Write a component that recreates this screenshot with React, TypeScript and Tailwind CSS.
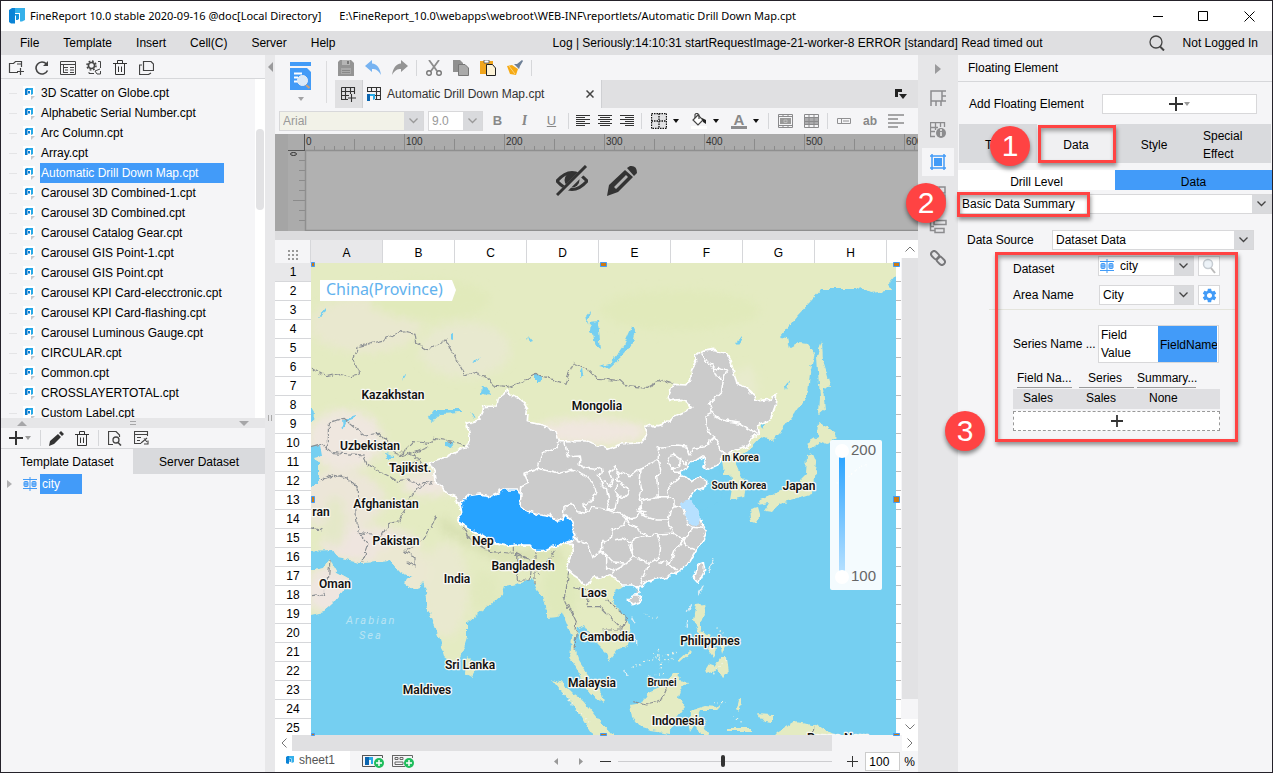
import React from "react";
import type { ReactNode } from "react";
import { MdSettings } from "react-icons/md";

const FILES = [
  "3D Scatter on Globe.cpt",
  "Alphabetic Serial Number.cpt",
  "Arc Column.cpt",
  "Array.cpt",
  "Automatic Drill Down Map.cpt",
  "Carousel 3D Combined-1.cpt",
  "Carousel 3D Combined.cpt",
  "Carousel Catalog Gear.cpt",
  "Carousel GIS Point-1.cpt",
  "Carousel GIS Point.cpt",
  "Carousel KPI Card-elecctronic.cpt",
  "Carousel KPI Card-flashing.cpt",
  "Carousel Luminous Gauge.cpt",
  "CIRCULAR.cpt",
  "Common.cpt",
  "CROSSLAYERTOTAL.cpt",
  "Custom Label.cpt",
];

function Ic({ w = 16, h = 16, label, children }: { w?: number; h?: number; label?: string; children: ReactNode }) {
  return (
    <svg width={w} height={h} viewBox={`0 0 ${w} ${h}`} fill="none" aria-label={label} className="shrink-0">
      {children}
    </svg>
  );
}

function Logo({ size }: { size: number }) {
  return (
    <svg width={size} height={size} viewBox="0 0 16 16" className="shrink-0">
      <path d="M0 2L3 0H8V5H6V15.500H2L0 14Z" fill="#0a83d6" />
      <path d="M6 0H16V12L13 13.500H11V5H6Z" fill="#35b0ea" />
      <path d="M6 6H10V11L8.500 12H6Z" fill="#1593dd" />
      <path d="M6 7.500H7V16H6Z" fill="#fff" />
    </svg>
  );
}

function FileIcon() {
  return (
    <svg width="12" height="14" viewBox="0 0 12 14" className="shrink-0">
      <path d="M0 0H12V9L8 14H0Z" fill="#fff" />
      <path d="M2 3L4 2H6V4H4.500V9H2Z" fill="#0a7dcf" />
      <path d="M4.500 2H10V8L8 9V4H4.500Z" fill="#27a8e6" />
      <path d="M5 5H7V7.500H5Z" fill="#0a7dcf" />
      <path d="M8 10H12L8 14Z" fill="#c6c8cc" />
    </svg>
  );
}

function DataIcon() {
  return (
    <Ic w={14} h={14}>
      <path d="M7 0V14M0 2.500H14M0 11.500H14" stroke="#429bf7" />
      <rect x="1" y="4.500" width="4" height="5" rx="1" fill="#8cc0f8" stroke="#429bf7" />
      <rect x="9" y="4.500" width="4" height="5" rx="1" fill="#8cc0f8" stroke="#429bf7" />
      <path d="M1 7H5M9 7H13" stroke="#429bf7" />
    </Ic>
  );
}

function Trash() {
  return (
    <Ic w={14} h={15} label="Delete">
      <path d="M0 3.500H14M4.500 3V.5H9.500V3M2.500 4V14.500H11.500V4M5.500 6.500V12M8.500 6.500V12" stroke="#333" />
    </Ic>
  );
}

function Btn({ label, w = "w-[26px]", children }: { label: string; w?: string; children: ReactNode }) {
  return (
    <button type="button" aria-label={label} className={`flex h-full shrink-0 items-center justify-center ${w}`}>
      {children}
    </button>
  );
}

function Chevron({ color = "#444" }: { color?: string }) {
  return (
    <Ic w={9} h={6}>
      <path d="M.5 .5L4.500 4.500L8.500 .5" stroke={color} strokeWidth="1.300" />
    </Ic>
  );
}

function Caret({ color = "#111" }: { color?: string }) {
  return (
    <Ic w={6} h={4}>
      <path d="M0 0H6L3 4Z" fill={color} />
    </Ic>
  );
}

function Combo({ label, value, className, text = "text-black", bg = "bg-white", icon }: {
  label: string; value: string; className: string; text?: string; bg?: string; icon?: boolean;
}) {
  return (
    <div className={`relative flex h-5 border border-[#d8d8da] ${bg} ${className}`}>
      {icon && <span className="flex w-[18px] items-center pl-px"><DataIcon /></span>}
      <select aria-label={label} defaultValue={value} className={`min-w-0 flex-1 appearance-none bg-transparent pl-[3px] outline-none ${text}`}>
        <option>{value}</option>
      </select>
      <span className="pointer-events-none flex w-[19px] items-center justify-center bg-[#d9dadd]">
        <Chevron color={text === "text-black" ? "#444" : "#999"} />
      </span>
    </div>
  );
}

function LeftPanel() {
  return (
    <aside className="flex w-[264px] shrink-0 flex-col bg-[#f5f5f7]">
      <div className="flex h-6 shrink-0 items-center border-b border-[#d6d7da] pl-[2px] pt-[2px]">
        <Btn label="New folder">
          <Ic w={16} h={15}>
            <path d="M10 12.500H1.500V3.500H5.500L7.500 1.500H13.500V7M9 4H13M12.500 8V15M9 11.500H16" stroke="#444" strokeWidth="1.200" />
          </Ic>
        </Btn>
        <Btn label="Refresh">
          <Ic w={14} h={14}>
            <path d="M12.500 9.500A6 6 0 1 1 11.500 3" stroke="#444" strokeWidth="1.600" />
            <path d="M13 0V5H8Z" fill="#444" />
          </Ic>
        </Btn>
        <Btn label="Templates">
          <Ic w={16} h={14}>
            <path d="M.5 .5H15.500V13.500H.5ZM0 3.500H15M3 6.500H8M5 9H8M3 11.500H8M3.500 4V12M10 6.500H14M10 9H14M10 11.500H14" stroke="#444" />
          </Ic>
        </Btn>
        <Btn label="Settings">
          <Ic w={16} h={15}>
            <circle cx="5.500" cy="5.500" r="3" stroke="#444" strokeWidth="1.500" />
            <circle cx="5.500" cy="5.500" r="4.500" stroke="#444" strokeWidth="1.500" strokeDasharray="1.800 1.730" />
            <path d="M12 1.500H14.500V8M3 12V13.500H8M14.500 11V14H11L9 11L14 9" stroke="#444" />
          </Ic>
        </Btn>
        <Btn label="Delete"><Trash /></Btn>
        <Btn label="Copy">
          <Ic w={15} h={14}>
            <path d="M4.500 .5H12L14.500 3V9.500H4.500ZM3 4H.5V13.500H9.500L12 12" stroke="#444" strokeWidth="1.200" />
          </Ic>
        </Btn>
      </div>
      <div className="flex h-[339px] shrink-0">
        <ul className="min-w-0 flex-1 overflow-hidden pt-1">
          {FILES.map((f) => (
            <li key={f} className="flex h-5 items-center">
              <span className="ml-2 h-px w-2 bg-[#e4e4e6]" />
              <span className="ml-[6px] flex w-[17px]"><FileIcon /></span>
              <button type="button" className={f.startsWith("Auto") ? "h-5 w-[184px] bg-[#429bf9] pl-px text-left text-white" : "h-5 pl-px text-left"}>
                {f}
              </button>
            </li>
          ))}
        </ul>
        <div className="w-[10px] bg-white px-px pt-[50px]"><div className="h-[81px] rounded-full bg-[#e2e2e4]" /></div>
      </div>
      <div className="flex h-[10px] shrink-0 items-center justify-between bg-[#e6e6e8] px-4">
        <Ic w={10} h={5}><path d="M0 5H10L5 0Z" fill="#a6a6a8" /></Ic>
        <Ic w={6} h={4}><path d="M0 .5H6M0 3.500H6" stroke="#a6a6a8" /></Ic>
        <Ic w={10} h={5}><path d="M0 0H10L5 5Z" fill="#a6a6a8" /></Ic>
      </div>
      <div className="flex h-[21px] shrink-0 items-center border-b border-[#d6d7da] pl-2">
        <button type="button" aria-label="Add dataset" className="flex items-center">
          <Ic w={14} h={14}><path d="M7 0V14M0 7H14" stroke="#333" strokeWidth="2" /></Ic>
          <span className="ml-[2px]"><Caret color="#999" /></span>
        </button>
        <span className="ml-[9px] mr-[2px] h-4 w-px bg-[#d6d7da]" />
        <Btn label="Edit">
          <Ic w={15} h={15}><path d="M0 15L1 10L9 3L12 6L5 13ZM10 2L12 0L15 3L13 5Z" fill="#333" /></Ic>
        </Btn>
        <Btn label="Delete dataset"><Trash /></Btn>
        <span className="mx-[3px] h-4 w-px bg-[#d6d7da]" />
        <Btn label="Preview dataset">
          <Ic w={14} h={15}>
            <path d="M5 13.500H.5V.5H8L11.500 4V6" stroke="#444" strokeWidth="1.200" />
            <circle cx="8" cy="9" r="3" stroke="#444" strokeWidth="1.300" />
            <path d="M10 11.500L13 14.500" stroke="#444" strokeWidth="1.600" />
          </Ic>
        </Btn>
        <Btn label="Dataset options">
          <Ic w={15} h={14}>
            <path d="M7 12.500H.5V.5H13.500V5M0 3.500H13M3 6.500H7M3 9.500H6M13 7L7 12M10 7.500L13 11M14 9.500V13H10" stroke="#444" strokeWidth="1.100" />
          </Ic>
        </Btn>
      </div>
      <div className="flex h-[25px] shrink-0">
        <button type="button" className="w-1/2 pt-px">Template Dataset</button>
        <button type="button" className="w-1/2 bg-[#d9dadd] pt-px">Server Dataset</button>
      </div>
      <div className="flex h-5 items-center">
        <span className="ml-[6px]"><Ic w={5} h={8}><path d="M0 0L5 4L0 8Z" fill="#b0b0b2" /></Ic></span>
        <span className="ml-[11px] flex w-[17px]"><DataIcon /></span>
        <button type="button" className="h-5 w-[42px] bg-[#429bf9] pl-[2px] text-left text-white">city</button>
      </div>
    </aside>
  );
}

function AlignLines({ kind }: { kind: "left" | "center" | "right" }) {
  const short = kind === "left" ? "M0 2.500H9M0 6.500H9M0 10.500H9" : kind === "center" ? "M2 2.500H12M2 6.500H12M2 10.500H12" : "M5 2.500H14M5 6.500H14M5 10.500H14";
  return (
    <Ic w={14} h={12}>
      <path d="M0 .5H14M0 4.500H14M0 8.500H14" stroke="#333" />
      <path d={short} stroke="#333" />
    </Ic>
  );
}

function Sep() {
  return <span className="mx-[3px] h-4 w-px shrink-0 bg-[#d6d7da]" />;
}

function TopTools() {
  return (
    <div className="flex h-[53px] shrink-0 bg-[#f5f5f7]">
      <button type="button" aria-label="Preview" className="flex w-[51px] flex-col items-center border-[#d6d7da] pt-[7px]">
        <Ic w={21} h={28}>
          <rect width="21" height="4" fill="#429bf7" />
          <path d="M0 6H17L21 10V28H0Z" fill="#429bf7" />
          <path d="M4 11.500H12M4 15.500H8M4 19.500H8" stroke="#fff" strokeWidth="2" />
          <circle cx="12.500" cy="18.500" r="5" fill="#d9e9f8" stroke="#e9eef4" />
          <path d="M16 23L19.500 26" stroke="#c9a07a" strokeWidth="2" />
        </Ic>
        <span className="mt-[7px]"><Caret color="#a2a2a4" /></span>
      </button>
      <span className="mt-[6px] h-[42px] w-px bg-[#dcdcde]" />
      <div className="min-w-0 flex-1 pl-2">
        <div className="-ml-[3px] flex h-[25px] items-center">
          <Btn label="Save" w="w-[27px]">
            <Ic><path d="M0 2L2 0H13L16 3V16H0Z" fill="#949494" /><path d="M4 0H12V5H4Z" fill="#b5b5b5" /><path d="M9 1H11V4H9Z" fill="#777" /><path d="M3 8H13V14H3Z" fill="#a9a9a9" /><path d="M4 10.500H12M4 12.500H12" stroke="#888" /></Ic>
          </Btn>
          <Btn label="Undo" w="w-[27px]">
            <Ic><path d="M0 6L7 0V3.500C12 4 15 8 16 15C13 10 11 9 7 9V12Z" fill="#77b3f1" /></Ic>
          </Btn>
          <Btn label="Redo" w="w-[27px]">
            <Ic><path d="M16 6L9 0V3.500C4 4 1 8 0 15C3 10 5 9 9 9V12Z" fill="#949494" /></Ic>
          </Btn>
          <Sep />
          <Btn label="Cut" w="w-[27px]">
            <Ic><path d="M3 0L11 11M13 0L5 11" stroke="#8c8c8c" strokeWidth="1.800" /><circle cx="3" cy="13" r="2.300" stroke="#777" strokeWidth="1.400" /><circle cx="13" cy="13" r="2.300" stroke="#777" strokeWidth="1.400" /></Ic>
          </Btn>
          <Btn label="Copy" w="w-[27px]">
            <Ic><path d="M0 0H7L10 3V12H0Z" fill="#909090" /><path d="M5.500 4.500H12L15.500 8V15.500H5.500Z" fill="#aaa" stroke="#777" /></Ic>
          </Btn>
          <Btn label="Paste" w="w-[27px]">
            <Ic><path d="M0 1H13V14H0Z" fill="#f0a51d" /><path d="M4 0H9V3H4Z" fill="#fff" stroke="#555" strokeWidth=".8" /><path d="M6.500 4.500H12.500L15.500 8V15.500H6.500Z" fill="#fdf3d8" stroke="#222" /></Ic>
          </Btn>
          <Btn label="Format brush" w="w-[27px]">
            <Ic><path d="M0 6L5 5L11 9L9 15L3 14Z" fill="#f6aa14" /><path d="M2 6L8 14" stroke="#fbd27c" /><path d="M7 4L12 9L13 6L16 1L15 0L10 4Z" fill="#6d7f96" /></Ic>
          </Btn>
          <Sep />
        </div>
        <div className="flex h-7 bg-[#e0e0e2]">
          <Btn label="New template" w="w-[27px]">
            <Ic w={15} h={15}><path d="M.5 .5H13.500V7M.5 .5V12.500H7M0 4.500H14M0 8.500H8M4.500 0V13M9.500 0V7M10.500 7V15M7 11H15" stroke="#333" strokeWidth="1.100" /></Ic>
          </Btn>
          <div className="flex w-[240px] items-center border-l border-r border-[#cfd0d3] bg-[#f5f5f7] pl-1">
            <Ic w={14} h={14}><path d="M.5 4V.5H13.500V13M0 4.500H13M4.500 0V5M9.500 0V13M8 8.500H14M8 12.500H14" stroke="#333" strokeWidth="1.100" /><path d="M0 7H3V14H0Z" fill="#0b65b0" /><path d="M3 7H8V12L6 13V9H3Z" fill="#28a9e6" /></Ic>
            <span className="ml-[6px] flex-1 whitespace-nowrap text-[#333]">Automatic Drill Down Map.cpt</span>
            <button type="button" aria-label="Close tab" className="mr-[7px]">
              <Ic w={8} h={8}><path d="M.5 .5L7.500 7.500M7.500 .5L.5 7.500" stroke="#444" strokeWidth="1.500" /></Ic>
            </button>
          </div>
          <button type="button" aria-label="Tab list" className="ml-auto mr-[11px]">
            <Ic w={12} h={10}><path d="M0 0H7V3H3V8H0Z" fill="#222" /><path d="M4 5H12L8 10Z" fill="#222" /></Ic>
          </button>
        </div>
      </div>
    </div>
  );
}

function FormatBar() {
  return (
    <div className="flex h-[26px] shrink-0 items-center overflow-hidden bg-[#f5f5f7] pl-1 text-[#888]">
      <Combo label="Font" value="Arial" className="mr-1 w-[145px] shrink-0" text="text-[#999]" bg="bg-[#f2f2e8]" />
      <Combo label="Font size" value="9.0" className="mr-px w-[55px] shrink-0" text="text-[#999]" />
      <Btn label="Bold" w="w-[27px]"><b className="text-[13px]">B</b></Btn>
      <Btn label="Italic" w="w-[27px]"><i className="font-serif text-[14px] font-bold">I</i></Btn>
      <Btn label="Underline" w="w-[27px]"><u className="text-[13px]">U</u></Btn>
      <Sep />
      <Btn label="Align left" w="w-[22px]"><AlignLines kind="left" /></Btn>
      <Btn label="Align center" w="w-[22px]"><AlignLines kind="center" /></Btn>
      <Btn label="Align right" w="w-[22px]"><AlignLines kind="right" /></Btn>
      <Sep />
      <Btn label="Borders" w="w-10">
        <Ic><path d="M.5 .5H15.500V15.500H.5ZM.5 8H15.500M8 .5V15.500" fill="#e2e2e4" stroke="#111" strokeWidth="1.300" strokeDasharray="1.500 1" /></Ic>
        <span className="ml-[6px]"><Caret /></span>
      </Btn>
      <Btn label="Fill colour" w="w-10">
        <Ic><path d="M7 2L2 7L7 12L12 7Z" fill="#fff" stroke="#444" strokeWidth="1.200" /><path d="M4 5V1.500Q6 -1 8 2V6" stroke="#444" strokeWidth="1.200" /><path d="M11 5L15 7V11L12 9Z" fill="#222" /><path d="M0 13H16V16H0Z" fill="#fff" /></Ic>
        <span className="ml-[6px]"><Caret /></span>
      </Btn>
      <Btn label="Font colour" w="w-10">
        <span className="flex w-4 flex-col items-center text-[15px] leading-[12px]"><b>A</b><span className="h-[3px] w-4 bg-[#8c8c8e]" /></span>
        <span className="ml-[6px]"><Caret /></span>
      </Btn>
      <Sep />
      <Btn label="Merge cells">
        <Ic w={15} h={14}><path d="M.5 .5H14.500V13.500H.5ZM0 2.500H15M0 11.500H15M5 0V3M10 0V3M5 11V14M10 11V14" stroke="#8a8a8c" /><path d="M2 4H13V10H2Z" fill="#999" /><path d="M6 6H9V8.500H6Z" stroke="#ccc" strokeWidth=".7" /></Ic>
      </Btn>
      <Btn label="Unmerge cells">
        <Ic w={15} h={14}><path d="M1 4H14V11H1Z" fill="#ababad" /><path d="M.5 .5H14.500V13.500H.5ZM0 3.500H15M0 7.500H15M0 10.500H15M5 0V14M10 0V14" stroke="#8a8a8c" /></Ic>
      </Btn>
      <Sep />
      <Btn label="Text box"><Ic w={14} h={6}><path d="M.5 .5H13.500V5.500H.5ZM4.500 0V6M6 3H12" stroke="#909092" /></Ic></Btn>
      <Btn label="Text"><b className="text-[12px]">ab</b></Btn>
      <Btn label="Paragraph"><Ic w={16} h={14}><path d="M0 1H16M0 5H10M0 9H16M0 13H10" stroke="#8a8a8c" strokeWidth="1.500" /></Ic></Btn>
    </div>
  );
}

function Ruler() {
  const ticks = Array.from({ length: 120 }, (_, i) => i);
  return (
    <div className="relative h-[97px] shrink-0 overflow-hidden bg-[#b1b1b1]">
      <svg width="100%" height="97" className="block">
        <rect width="100%" height="17" fill="#ababab" />
        <rect width="30" height="97" fill="#ababab" />
        <rect width="13" height="97" fill="#a5a5a5" />
        {ticks.map((i) => (
          <g key={i}>
            <path d={`M${29.5 + i * 10} ${i % 10 === 0 ? 0 : i % 5 === 0 ? 5 : 12}V16`} stroke={i === 0 ? "#555" : "#8b8b8b"} />
            {i % 10 === 0 && <text x={31 + i * 10} y="11" fontSize="10" fill="#333">{i * 10}</text>}
          </g>
        ))}
        {[1, 2, 3, 4, 5, 6, 7].map((i) => (
          <path key={i} d={`M${i === 5 ? 18 : 24} ${16.5 + i * 10}H30`} stroke="#8b8b8b" />
        ))}
        <path d="M13 16.500H30" stroke="#555" />
        <ellipse cx="18.500" cy="20" rx="3" ry="1.500" fill="none" stroke="#333" />
        <path d="M30 16.500H3000M30.500 17V96.500H3000" fill="none" stroke="#8f8f8f" strokeWidth="1.500" />
      </svg>
      <div className="absolute inset-0 flex justify-center gap-[18px] pt-[31px] text-[#333]">
        <button type="button" aria-label="Hide element" className="h-8">
          <svg width="32" height="32" viewBox="0 0 32 32" fill="none">
            <path d="M1 16Q16 -1 31 16Q16 33 1 16Z" stroke="#333" strokeWidth="3" />
            <circle cx="16" cy="15" r="7.500" fill="#333" />
            <path d="M32 1.500L2 31.500" stroke="#b1b1b1" strokeWidth="6" />
            <path d="M30 1L1 30" stroke="#333" strokeWidth="3" />
          </svg>
        </button>
        <button type="button" aria-label="Edit element" className="h-8">
          <svg width="32" height="32" viewBox="0 0 32 32" fill="#333">
            <path fillRule="evenodd" d="M1 31L3 20L19 5L27 12L12 27ZM8 22L10 24L22 12L20 10Z" />
            <path d="M21 3L24 1Q31 0 31 8L28 11Z" />
          </svg>
        </button>
      </div>
    </div>
  );
}

/* Labels are placed on the map canvas by their centre. */
const PLACES: [string, number, number, number][] = [
  ["Kazakhstan", 393, 399, 12], ["Mongolia", 597, 410, 12], ["Uzbekistan", 370, 450, 12],
  ["Afghanistan", 386, 508, 12], ["ran", 321, 516, 12],
  ["Pakistan", 396, 545, 12], ["Bangladesh", 523, 570, 12], ["India", 457, 583, 12],
  ["Oman", 335, 588, 12], ["Sri Lanka", 470, 669, 12], ["Maldives", 427, 694, 12],
  ["Laos", 594, 597, 12], ["Cambodia", 607, 641, 12], ["Malaysia", 592, 687, 12],
  ["Brunei", 662, 686, 10], ["Indonesia", 678, 725, 12], ["Philippines", 710, 645, 12],
  ["Japan", 799, 490, 12], ["South Korea", 739, 489, 10],
];

const PROVINCES = [
  "M355 305L350 322L328 330L305 340L295 385L255 400L265 430L245 440L243 465",
  "M375 308L385 350L418 348L420 362L410 370L440 385L465 388L487 380L490 398L475 408L482 430L498 425L508 438L520 420L510 395L525 382L535 395L530 420L545 432L558 440L565 460L550 475L532 465L525 450L535 432",
  "M295 385L345 400L395 388L440 410L460 430L468 455L455 485L432 490L435 520L412 515L390 490L375 500L372 540",
  "M482 430L500 450L508 485L500 510L525 508L530 485L532 465M435 520L455 500L500 510L540 518L560 535L548 560L515 570L510 600L495 610L485 600L485 635L455 650L440 610L415 600L400 590",
  "M535 395L570 410L600 385L655 360L655 325L690 322L705 315L740 318L750 345L760 325L795 320L822 295",
  "M600 385L598 420L605 450L598 480L602 510L590 530L560 535",
  "M655 360L662 390L650 410L655 470L598 482M655 470L685 470L680 455L695 430L715 415L722 400L705 400L700 382",
  "M690 350L705 345L720 355L715 380L698 385L682 370ZM715 358L735 375L745 360",
  "M598 500L605 525L650 540L685 540L690 515L705 500L705 480L680 470",
  "M705 500L725 500L735 520L745 555L760 562L735 590L730 600L700 580L685 550L685 540",
  "M560 535L570 555L620 585L580 595L570 620L582 650L560 670L515 665L500 645L485 635",
  "M620 585L650 582L700 580M650 582L660 610L655 655L625 670L582 650M625 670L615 700L600 735",
  "M730 600L740 620L765 630M730 600L705 630L690 670L655 665M690 670L710 690M525 600L548 595L575 610L582 650",
  "M500 645L500 685L525 695M560 670L525 690L515 705M485 635L500 650",
  "M785 40L800 65L820 85L830 110L850 120L860 95L840 85L820 90M850 120L845 155L805 195L815 220L795 230L800 265L825 295L855 345",
  "M815 220L845 240L900 250L950 280M760 562L790 565M590 510L615 515L605 525",
];

const BORDERS = [
  "M-387 85L-340 110L-300 100L-270 110L-240 105L-260 60L-245 20L-170 0L-115 -28L-75 -20L-70 10L-35 28L18 0L75 105L100 95L130 105L160 135L200 140L250 125L290 103L375 130L400 68L440 85L470 115L540 122L560 140L620 145L665 118L700 130",
  "M-335 335L-335 250L-290 235L-230 285L-180 280L-150 315L-125 350L-80 305L-30 310L-20 295L40 305L78 315",
  "M-387 320L-355 310L-320 338L-230 345L-220 370L-190 390L-150 410L-125 425L-95 420L-60 432L-20 420M-360 425L-320 405L-275 415L-245 445L-245 480L-220 500",
  "M-245 480L-253 510L-245 580L-215 610L-235 665M-245 580L-175 590L-155 550L-120 545L-100 490L-65 440L-20 430M-100 665L-75 680L-75 650L-105 635L-50 600L-10 530",
  "M70 560L90 600L150 635L220 640L220 605M225 645L270 660L230 640L232 720L270 720L275 680L300 700M285 620L285 730M390 660L375 780L410 850L405 930M400 740L450 750L440 800L480 800L540 860L545 890M345 630L310 680",
  "M-387 770L-350 765L-335 720L-330 660M-387 560L-355 570M500 780L560 830L545 870L490 870L495 900M580 1085L620 1095L660 1085L680 1040M1118 1160V1185M-125 350L-100 340L-60 355L-90 375L-50 380L-80 340L-30 320",
];

const TIBET = "M60 490L85 467L120 462L150 468L190 450L235 450L243 465L240 500L260 515L300 525L335 530L350 543L370 540L378 525L390 535L400 560L400 600L375 610L335 620L310 632L285 632L270 615L225 615L205 618L160 610L130 590L95 570L60 550L55 530L65 520Z";

function MapCanvas() {
  return (
    <svg viewBox="311 263 585 472" preserveAspectRatio="xMinYMin slice" className="block h-full w-full overflow-visible" role="img" aria-label="Map of China by province">
      <defs>
        <filter id="coast" x="0" y="0" width="100%" height="100%">
          <feTurbulence type="fractalNoise" baseFrequency="0.13" numOctaves="3" seed="4" result="n" />
          <feDisplacementMap in="SourceGraphic" in2="n" scale="6" xChannelSelector="R" yChannelSelector="G" />
        </filter>
        <filter id="soft"><feGaussianBlur stdDeviation="5" /></filter>
        <linearGradient id="scale" x1="0" y1="0" x2="0" y2="1">
          <stop offset="0" stopColor="#2ba4ff" />
          <stop offset="1" stopColor="#b5e0ff" />
        </linearGradient>
        <clipPath id="sheet"><rect x="311" y="263" width="585" height="472" /></clipPath>
        <clipPath id="land">
          <path d="M300 250H910V270L896 275L889 283L892 290L872 293L862 286L855 289H822L812 300L797 316L785 331L780 337L788 338L790 348L799 343L808 344L815 353L810 373L808 393L797 410L782 430L772 440L760 437L748 450L735 462L740 473L746 487L744 497L730 500L732 488L730 474L724 474L722 460L690 470L660 500L640 560L622 587L613 593V600L620 610L628 622L632 637L628 645L617 650L609 661L607 653L597 643L590 637L584 625L578 628L574 640L578 660L589 677L600 690L603 703L590 694L580 675L570 657L572 637L562 612L557 617L547 618V610L543 597L537 590L533 578L517 585L505 587L503 593L487 607L470 620L467 623V637L463 650L460 657L452 662L445 657L440 640L432 620L427 607L425 590L422 582L420 588L413 590L403 582L412 577L400 572L390 561L360 563L337 558L332 550L300 551Z" />
          <path d="M300 571H311L323 568L329 559L332 563L337 572L348 578L350 582L338 597L333 603L323 612L311 615L300 618Z" />
        </clipPath>
      </defs>
      <rect x="311" y="263" width="585" height="472" fill="#74cff1" />
      <g clipPath="url(#sheet)">
        <g filter="url(#coast)">
          <rect x="300" y="250" width="610" height="495" fill="#74cff1" />
          <g clipPath="url(#land)">
            <rect x="295" y="245" width="620" height="500" fill="#e4ebc2" />
            <g filter="url(#soft)">
              <ellipse cx="365" cy="325" rx="55" ry="28" fill="#e9e8cf" />
              <ellipse cx="465" cy="350" rx="45" ry="28" fill="#e8e9cf" />
              <ellipse cx="430" cy="300" rx="60" ry="20" fill="#e1eabb" />
              <ellipse cx="680" cy="310" rx="80" ry="20" fill="#e1eabb" />
              <ellipse cx="345" cy="440" rx="38" ry="30" fill="#efe7df" />
              <ellipse cx="340" cy="500" rx="45" ry="30" fill="#ece6d8" />
              <ellipse cx="370" cy="545" rx="50" ry="18" fill="#efe5df" />
              <ellipse cx="335" cy="522" rx="10" ry="26" fill="#e4e8c8" />
              <ellipse cx="428" cy="484" rx="26" ry="12" fill="#efe6df" />
              <ellipse cx="590" cy="432" rx="58" ry="13" fill="#f0e7df" />
              <ellipse cx="445" cy="590" rx="24" ry="48" fill="#e9e9cf" />
              <ellipse cx="400" cy="570" rx="30" ry="28" fill="#ebe8d2" />
              <ellipse cx="485" cy="592" rx="14" ry="20" fill="#e1e9bd" />
              <path d="M440 515L500 552L560 550L565 560L500 562L440 530Z" fill="#d8e0b2" />
              <ellipse cx="330" cy="590" rx="25" ry="24" fill="#efe6e0" />
              <ellipse cx="560" cy="590" rx="18" ry="30" fill="#dfe9bb" />
              <ellipse cx="745" cy="385" rx="12" ry="18" fill="#e8ebcd" />
            </g>
          </g>
          <g fill="#e4ebc2">
            <path d="M822 342L823 360L827 373L831 388L823 387L825 410L819 415L820 397L818 373L817 355Z" />
            <path d="M818 422L835 432L837 437L828 445L820 442L810 450L807 443L817 437Z" />
            <path d="M807 455L813 453L817 463L815 477L813 493L800 497L790 500L780 503L772 512L765 511L770 503L757 505L760 500L777 493L797 484L806 475Z" />
            <path d="M750 510L758 508L760 515L755 523L752 522Z" />
            <path d="M467 656L473 662L476 670L472 677L465 673Z" />
            <path d="M552 680L563 683L572 692L583 700L590 708L602 723L613 735V745H592V735L584 722L575 707L560 690Z" />
            <path d="M630 705L642 703L648 693L662 687L673 673H679L678 680L688 681L680 690L678 698L685 707L677 717L670 733L650 730L640 727L632 717Z" />
            <path d="M692 710L705 706L717 707L722 702L718 711L700 711L697 718L707 720L702 724L708 735H700L695 724L690 732L688 722Z" />
            <path d="M696 605L704 604L706 615L700 623V630L710 635L708 640L698 632L693 620Z" />
            <path d="M705 670L709 664L715 666L720 658L727 658L729 672L723 678L718 670L706 674ZM710 642L716 648L714 658L708 650ZM720 640L725 646L722 654Z" />
            <path d="M678 661L690 650L692 652L680 663ZM765 745L777 732L793 722L803 723L823 728L835 735L840 745ZM757 714L773 715V723L763 722ZM728 728H752V731H728ZM738 700L741 698L740 712L736 708Z" />
          </g>
          <g fill="#74cff1">
            <path d="M600 366L612 362L624 345L632 327L635 330L631 346L622 356L609 368Z" />
            <path d="M428 418L434 410L461 410V413L440 414L433 422ZM482 356L473 363L472 361ZM450 335L453 334V339L450 338ZM402 376L406 375L403 380ZM300 447L320 445L322 456L315 458L318 463V485H300ZM300 408H311L314 413L313 421H300Z" />
            <path d="M483 386L490 392L489 396L482 393ZM445 442L455 441L452 447L445 446ZM342 420L356 416V418L346 422L343 430ZM535 375H542L540 382H535ZM580 372L582 368L583 376L580 378ZM528 336L533 342L530 343ZM735 341L743 337L738 344ZM785 386L790 379L786 391Z" />
            <path d="M318 317L326 308V312L320 317ZM586 315L590 310L588 325ZM590 322L598 321L601 350L597 347L594 335L589 331ZM761 424L766 423L764 429ZM470 412L477 418L473 417ZM385 454L395 456V458H386Z" />
          </g>
          <g transform="translate(440 340) scale(.3333)">
            {BORDERS.map((d) => <path key={d} d={d} fill="none" stroke="#8b8f93" strokeWidth="3.500" strokeDasharray="22 3" />)}
            <path d="M770 340H840V400L852 420L840 480L770 520L730 450L700 410Z" fill="#74cff1" />
            <g stroke="#fff" strokeWidth="5" strokeLinejoin="round">
              <path
                fill="#cbcbcb"
                d="M200 148L215 165L245 180L265 210L262 245L310 255L345 275L355 305L440 306L475 318L505 328L545 312L605 308L622 285L615 255L628 250L640 260L680 250L700 230L755 205L745 190L725 178L690 182L685 170L700 133L740 135L752 120L755 90L770 65L765 45L785 35L820 28L860 40L868 55L880 90L890 130L915 140L945 165L948 183L990 178L1010 165L1005 200L990 240L950 255L955 280L930 300L920 320L880 335L855 345L830 375L795 390L785 380L795 355L785 350L770 360L755 365L740 385L720 395L722 405L745 415L755 425L775 410L800 422V435L775 450L760 460L745 480L765 505L780 540L790 560L800 575L790 600L770 630L750 665L720 690L700 705L660 715L620 725L595 745L575 735L545 735L530 715L500 705L480 715L460 710L450 730L430 735L415 715L400 705L380 685L385 665L397 640L395 610L375 610L355 615L335 620L310 632L285 632L270 615H225L205 618L160 610L130 590L95 570L60 550L55 530L65 520L60 490L50 487L45 470L20 460L10 445L-10 430L-15 400L-30 370L-10 360L20 350L80 320L90 295L85 265L78 250L118 240L128 200L170 198L175 175L195 162Z"
              />
              <path fill="#cbcbcb" d="M565 780L580 765H605L595 790L575 797ZM590 745L600 755L590 765M770 680L790 667L794 690L775 727L760 710Z" />
              <g fill="none" strokeWidth="4.500">{PROVINCES.map((d) => <path key={d} d={d} />)}</g>
              <path d={TIBET} fill="#27a3ff" />
            </g>
            <path d="M720 487L752 480L768 505L780 535L775 556L750 552L735 535L737 515L724 503Z" fill="#b6e0ff" />
            <g stroke="#eef3e4" strokeWidth="4" strokeDasharray="4 9" fill="none">
              <path d="M615 820L640 835L655 830M575 985L620 960L665 950L720 935M640 940L680 965L700 950M655 930L665 990M830 860L850 880M820 1085H860M880 1130L910 1150M1190 430L1280 370M630 1005L680 1000M370 1060L420 1120L450 1150M860 960L820 1000" />
              <path d="M822 655L805 700M785 740L775 760M755 790L745 815M745 840V860M575 830L585 850M590 900V920M555 990L558 1010" stroke="#dceef4" strokeDasharray="none" />
            </g>
          </g>
        </g>
        <g fontFamily="Roboto, sans-serif" fontWeight="600" fill="#111" textAnchor="middle" stroke="#f8f8f2" strokeWidth="2.500" strokeLinejoin="round" paintOrder="stroke">
          {PLACES.map(([n, x, y, s]) => <text key={n} x={x} y={y} fontSize={s}>{n}</text>)}
          <text x="389" y="472" fontSize="12" textAnchor="start">Tajikist.</text>
          <text x="472" y="545" fontSize="12" textAnchor="start">Nep</text>
          <text x="722" y="461" fontSize="10" textAnchor="start">ın Korea</text>
          <text x="807" y="742" fontSize="12" textAnchor="start">Papua New</text>
        </g>
        <g fontFamily="Roboto, sans-serif" fontStyle="italic" fontSize="11" fill="#b9e4f3">
          <text x="346" y="624" letterSpacing="2">Arabian</text>
          <text x="359" y="639" letterSpacing="2">Sea</text>
        </g>
      </g>
      <path d="M320 280H452L456 290L452 301H320Z" fill="#fff" />
      <text x="326" y="295" fontFamily="Noto Sans, sans-serif" fontSize="16" fill="#62b2ee">China(Province)</text>
      <rect x="830" y="440" width="52" height="150" rx="2" fill="#fff" fillOpacity=".92" />
      <rect x="839" y="456" width="6" height="116" fill="url(#scale)" />
      <circle cx="842" cy="451" r="7" fill="#fff" />
      <circle cx="842" cy="577" r="7" fill="#fff" />
      <g fontFamily="Liberation Sans, sans-serif" fontSize="15" fill="#666">
        <text x="851" y="455">200</text>
        <text x="851" y="581">100</text>
      </g>
      <g fill="#cc7a14" stroke="#429bf7">
        <path d="M311.500 262.500H314.500V266.500H311.500ZM600.500 262.500H606.500V266.500H600.500ZM893.500 262.500H899.500V266.500H893.500Z" />
        <path d="M311.500 496.500H314.500V502.500H311.500ZM893.500 496.500H899.500V502.500H893.500Z" />
        <path d="M311.500 733.500H314.500V735.500H311.500ZM600.500 733.500H606.500V735.500H600.500ZM893.500 733.500H899.500V735.500H893.500Z" />
      </g>
    </svg>
  );
}

function Sheet() {
  const rows = Array.from({ length: 25 }, (_, i) => i + 1);
  return (
    <div className="flex min-h-0 flex-1 flex-col border-t-[9px] border-[#dcdcde] bg-white">
      <div className="flex min-h-0 flex-1">
        <div className="flex min-w-0 flex-1 flex-col">
          <div className="flex h-[23px] shrink-0 overflow-hidden text-center leading-[27px]">
            <div className="flex w-9 shrink-0 items-center justify-center border-r border-[#d6d7da] bg-[#f5f5f7] pt-[6px]">
              <Ic w={10} h={10}><path d="M0 1H10M0 5H10M0 9H10" stroke="#999" strokeWidth="2" strokeDasharray="2 2" /></Ic>
            </div>
            {["A", "B", "C", "D", "E", "F", "G", "H"].map((c) => (
              <div key={c} className={c === "A" ? "w-[72px] shrink-0 border-r border-[#d6d7da] bg-[#e8e8ea]" : "w-[72px] shrink-0 border-r border-[#d6d7da]"}>{c}</div>
            ))}
          </div>
          <div className="flex min-h-0 flex-1">
            <div className="w-9 shrink-0 overflow-hidden text-center">
              {rows.map((r) => (
                <div key={r} className={r === 1 ? "h-[19px] border-b border-[#d6d7da] bg-[#e8e8ea] leading-[19px]" : "h-[19px] border-b border-[#d6d7da] leading-[19px]"}>{r}</div>
              ))}
            </div>
            <div className="z-10 min-w-0 flex-1 overflow-clip [overflow-clip-margin:4px]"><MapCanvas /></div>
            <div className="w-[5px] shrink-0 overflow-hidden">
              {rows.map((r) => <div key={r} className="h-[19px] border-b border-[#bbb]" />)}
            </div>
          </div>
        </div>
        <div className="flex w-[17px] shrink-0 flex-col items-center bg-[#f5f5f7]">
          <button type="button" aria-label="Scroll up" className="flex h-[18px] w-full items-center justify-center bg-white">
            <Ic w={10} h={6}><path d="M.5 5.500L5 1L9.500 5.500" stroke="#777" /></Ic>
          </button>
          <div className="w-4 flex-1 bg-[#e2e2e4]" />
          <div className="h-5" />
          <button type="button" aria-label="Scroll down" className="flex h-4 w-full items-center justify-center bg-white">
            <Ic w={10} h={6}><path d="M.5 .5L5 5L9.500 .5" stroke="#777" /></Ic>
          </button>
        </div>
      </div>
      <div className="flex h-4 shrink-0 bg-[#f5f5f7]">
        <button type="button" aria-label="Scroll left" className="flex w-[17px] items-center justify-center bg-white">
          <Ic w={6} h={10}><path d="M5.500 .5L1 5L5.500 9.500" stroke="#777" /></Ic>
        </button>
        <div className="mr-[70px] flex-1 bg-[#e0e0e2]" />
        <button type="button" aria-label="Scroll right" className="flex w-4 items-center justify-center bg-white">
          <Ic w={6} h={10}><path d="M.5 .5L5 5L.5 9.500" stroke="#777" /></Ic>
        </button>
      </div>
      <div className="flex h-[21px] shrink-0 items-center bg-[#f5f5f7]">
        <button type="button" className="flex h-full w-[75px] items-start gap-[5px] bg-white pl-[11px] pt-px text-[#555]">
          <span className="mt-1"><Logo size={8} /></span>sheet1
        </button>
        <button type="button" aria-label="Add sheet" className="ml-[12px]">
          <Ic w={22} h={14}><path d="M.5 .5H20.500V3M.5 0V11.500H13" stroke="#555" /><path d="M3 2H7V10H3Z" fill="#0b65b0" /><path d="M7 2H11V9H9V5H7Z" fill="#28a9e6" /><circle cx="17" cy="8" r="5" fill="#1fbd5c" /><path d="M17 5V11M14 8H20" stroke="#fff" strokeWidth="1.500" /></Ic>
        </button>
        <button type="button" aria-label="Add form sheet" className="ml-2">
          <Ic w={22} h={14}><path d="M.5 .5H20.500V3M.5 0V11.500H13M3 2.500H6V4.500H3ZM8 2.500H11V4.500H8ZM3 7H11V9.500H3Z" stroke="#666" /><circle cx="17" cy="8" r="5" fill="#1fbd5c" /><path d="M17 5V11M14 8H20" stroke="#fff" strokeWidth="1.500" /></Ic>
        </button>
        <span className="ml-auto flex items-center gap-[21px] pr-[17px]">
          <Ic w={4} h={7}><path d="M4 0V7L0 3.500Z" fill="#999" /></Ic>
          <Ic w={4} h={7}><path d="M0 0V7L4 3.500Z" fill="#999" /></Ic>
        </span>
        <button type="button" aria-label="Zoom out"><Ic w={11} h={11}><path d="M0 5.500H11" stroke="#333" /></Ic></button>
        <input
          type="range"
          aria-label="Zoom"
          defaultValue={49}
          className="mx-[7px] h-3 w-[214px] appearance-none bg-transparent [&::-webkit-slider-runnable-track]:h-px [&::-webkit-slider-runnable-track]:bg-[#cdcdd0] [&::-webkit-slider-thumb]:-mt-[6px] [&::-webkit-slider-thumb]:h-3 [&::-webkit-slider-thumb]:w-1 [&::-webkit-slider-thumb]:appearance-none [&::-webkit-slider-thumb]:rounded-sm [&::-webkit-slider-thumb]:bg-[#333]"
        />
        <button type="button" aria-label="Zoom in" className="ml-2"><Ic w={11} h={11}><path d="M0 5.500H11M5.500 0V11" stroke="#333" /></Ic></button>
        <input aria-label="Zoom percent" defaultValue="100" className="ml-[7px] h-[19px] w-[35px] border border-[#ccc] bg-white pl-[3px] text-[12px]" />
        <span className="pl-1 pr-[3px]">%</span>
      </div>
    </div>
  );
}

function SideTabs() {
  const box = "flex h-8 items-center justify-center";
  return (
    <nav className="flex w-10 shrink-0 flex-col bg-[#e6e6e8]">
      <button type="button" aria-label="Collapse" className="flex h-[27px] items-center justify-center">
        <Ic w={6} h={10}><path d="M0 0L6 5L0 10Z" fill="#9a9a9c" /></Ic>
      </button>
      <button type="button" aria-label="Cell element" className={box}>
        <Ic><path d="M1 16V1H12V11H1M11 1H16M12 6H16M12 11H16M6 11V16M11 11V16" stroke="#8c8c8e" strokeWidth="1.500" /></Ic>
      </button>
      <button type="button" aria-label="Cell attributes" className={box}>
        <Ic><path d="M5 14.500H.5V.5H14.500V5M0 5.500H8M0 9.500H5M5.500 0V8M10.500 0V5" stroke="#8c8c8e" strokeWidth="1.300" /><circle cx="11" cy="11" r="5" fill="#8c8c8e" /><path d="M11 7V9M11 10V14" stroke="#eee" strokeWidth="1.500" /></Ic>
      </button>
      <button type="button" aria-label="Floating element" className={box}>
        <span className="flex h-7 w-8 items-center justify-center bg-[#f5f5f7]">
          <Ic><path d="M0 2H16M0 14H16M2 0V16M14 0V16" stroke="#429bf7" strokeWidth="1.500" /><path d="M4 4H12V12H4Z" fill="#429bf7" /></Ic>
        </span>
      </button>
      <button type="button" aria-label="Widget" className={box}>
        <Ic><path d="M1 1H7V7H1ZM9 1H15V7H9ZM1 9H7V15H1ZM9 9H15V15H9Z" stroke="#8c8c8e" strokeWidth="1.500" /></Ic>
      </button>
      <button type="button" aria-label="Condition" className={box}>
        <Ic w={18}><path d="M5 2.500H17V6.500H5ZM6 10.500H15V14.500H6ZM5 8.500H1.500V2M1.500 8V12.500H6" stroke="#8c8c8e" strokeWidth="1.500" /></Ic>
      </button>
      <button type="button" aria-label="Hyperlink" className={box}>
        <Ic><g transform="rotate(45 8 8)" stroke="#77777a" strokeWidth="1.900"><rect x="-.5" y="5" width="9" height="6" rx="3" /><rect x="7.500" y="5" width="9" height="6" rx="3" /></g></Ic>
      </button>
    </nav>
  );
}

function Badge({ n, className }: { n: number; className: string }) {
  return (
    <span className={`absolute z-20 flex size-10 items-center justify-center rounded-full bg-[#ff4343] text-[30px] leading-none text-white shadow-[0_3px_4px_rgba(0,0,0,0.45)] ${className}`}>{n}</span>
  );
}

function Frame({ className }: { className: string }) {
  return <span className={`pointer-events-none absolute border-[3px] border-[#ff4343] shadow-[1px_3px_4px_rgba(0,0,0,0.4),inset_1px_3px_4px_rgba(0,0,0,0.35)] ${className}`} />;
}

function RightPanel() {
  return (
    <aside className="relative w-[314px] shrink-0 bg-[#f5f5f7]">
      <h2 className="flex h-[27px] items-center border-b border-[#d6d7da] pl-[10px]">Floating Element</h2>
      <div className="flex items-center pb-[10px] pl-[11px] pt-3">
        <span className="w-[133px]">Add Floating Element</span>
        <button type="button" aria-label="Add floating element" className="flex h-5 w-[155px] items-center justify-center gap-px border border-[#d8d8da] bg-white">
          <Ic w={14} h={14}><path d="M7 0V14M0 7H14" stroke="#333" strokeWidth="2" /></Ic>
          <Caret color="#999" />
        </button>
      </div>
      <div className="mx-px grid h-9 grid-cols-4">
        <button type="button" className="bg-[#d9dadd] pt-[3px]">Type</button>
        <button type="button" className="bg-[#f0f0f2] pt-[3px]">Data</button>
        <button type="button" className="bg-[#d9dadd] pt-[3px]">Style</button>
        <button type="button" className="bg-[#d9dadd] pl-[10px] pt-[3px] text-left leading-[18px]">Special<br />Effect</button>
      </div>
      <div className="mt-[10px] flex h-5">
        <button type="button" className="flex-1 bg-white pt-[3px]">Drill Level</button>
        <button type="button" className="flex-1 bg-[#429bf9] pt-[3px]">Data</button>
      </div>
      <Combo label="Summary type" value="Basic Data Summary" className="mt-1" />
      <div className="mt-4 flex items-center pl-[9px]">
        <span className="w-[85px]">Data Source</span>
        <Combo label="Data Source" value="Dataset Data" className="w-[202px]" />
      </div>
      <div className="mt-[6px] flex h-5 items-center pl-[55px]">
        <span className="w-[85px] pt-[6px]">Dataset</span>
        <Combo label="Dataset" value="city" icon className="w-[96px]" />
        <button type="button" aria-label="Search dataset" className="ml-1 flex h-5 w-[22px] items-center justify-center border border-[#d8d8da] bg-white">
          <Ic w={15} h={16}><circle cx="6" cy="6" r="4.500" fill="#edf3f8" stroke="#c7cdd3" strokeWidth="1.500" /><path d="M9 10L13 15" stroke="#bbb" strokeWidth="2" /></Ic>
        </button>
      </div>
      <div className="mt-[9px] flex h-5 items-center pl-[55px]">
        <span className="w-[86px]">Area Name</span>
        <Combo label="Area Name" value="City" className="w-[95px]" />
        <button type="button" aria-label="Area settings" className="ml-1 flex h-5 w-[22px] items-center justify-center border border-[#d8d8da] bg-white">
          <MdSettings size={17} color="#429bf7" />
        </button>
      </div>
      <div className="ml-[31px] mr-9 mt-1 h-px bg-[#e4e4dc]" />
      <div className="mt-[15px] flex items-center pl-[55px]">
        <span className="w-[85px] whitespace-nowrap">Series Name ...</span>
        <div className="flex h-[38px] w-[121px] border border-[#d8d8da] bg-white">
          <button type="button" className="w-[59px] pl-[2px] text-left leading-[18px]">Field<br />Value</button>
          <button type="button" className="w-[59px] overflow-hidden bg-[#429bf9] pl-[2px] pt-[2px] text-left">FieldName</button>
        </div>
      </div>
      <table className="ml-[55px] mt-[6px] w-[207px] table-fixed border-collapse text-left">
        <thead>
          <tr className="h-5">
            {["Field Na...", "Series", "Summary..."].map((h, i) => (
              <th key={h} className={`whitespace-nowrap p-0 align-top font-normal ${i === 0 ? "w-[63px]" : i === 1 ? "w-[61px]" : ""}`}>
                <span className={`block border-b border-[#999] leading-[18px] ${i === 0 ? "mx-1" : i === 1 ? "mx-[3px] pl-[9px]" : "mr-6"}`}>{h}</span>
              </th>
            ))}
          </tr>
        </thead>
        <tbody>
          <tr className="h-5 bg-[#dfdfe2]">
            <td className="p-0 pb-[2px] pl-[10px]">Sales</td><td className="p-0 pb-[2px] pl-[10px]">Sales</td><td className="p-0 pb-[2px] pl-3">None</td>
          </tr>
        </tbody>
      </table>
      <button type="button" aria-label="Add series" className="ml-[55px] mt-[2px] flex h-5 w-[207px] items-center justify-center border border-dashed border-[#999] bg-white">
        <Ic w={12} h={12}><path d="M6 0V12M0 6H12" stroke="#333" strokeWidth="1.800" /></Ic>
      </button>

      <Frame className="left-[80px] top-[70px] h-[38px] w-[78px]" />
      <Frame className="-left-px top-[137px] h-[25px] w-[133px]" />
      <Frame className="left-[37px] top-[197px] h-[190px] w-[243px]" />
      <Badge n={1} className="left-8 top-[71px]" />
      <Badge n={2} className="-left-[52px] top-[128px]" />
      <Badge n={3} className="-left-[13px] top-[356px]" />
    </aside>
  );
}

export default function App() {
  return (
    <div className="flex h-screen flex-col overflow-hidden border border-[#25222a] bg-[#f5f5f7] font-['Liberation_Sans',sans-serif] text-[12px] leading-4 text-black">
      <header className="flex h-[30px] shrink-0 items-center bg-white pl-2 font-['Noto_Sans',sans-serif] text-[11px]">
        <Logo size={16} />
        <span className="ml-[5px] whitespace-pre">FineReport 10.0 stable 2020-09-16 @doc[Local Directory]</span>
        <span className="ml-[18px] whitespace-pre">E:\FineReport_10.0\webapps\webroot\WEB-INF\reportlets/Automatic Drill Down Map.cpt</span>
        <div className="ml-auto flex h-full">
          <Btn label="Minimize" w="w-[45px]"><Ic w={10} h={10}><path d="M0 5.500H10" stroke="#000" /></Ic></Btn>
          <Btn label="Maximize" w="w-[46px]"><Ic w={10} h={10}><path d="M.5 .5H9.500V9.500H.5Z" stroke="#000" /></Ic></Btn>
          <Btn label="Close" w="w-[46px]"><Ic w={11} h={11}><path d="M.5 .5L10.500 10.500M10.500 .5L.5 10.500" stroke="#000" /></Ic></Btn>
        </div>
      </header>
      <div className="flex h-6 shrink-0 items-center bg-[#dfdfe1] pl-[19px]">
        <div className="flex gap-6">
          {["File", "Template", "Insert", "Cell(C)", "Server", "Help"].map((m) => <button type="button" key={m}>{m}</button>)}
        </div>
        <span className="ml-auto whitespace-nowrap">Log | Seriously:14:10:31 startRequestImage-21-worker-8 ERROR [standard] Read timed out</span>
        <button type="button" aria-label="Search" className="ml-[106px]">
          <Ic w={16} h={16}><circle cx="7" cy="7" r="6" stroke="#444" strokeWidth="1.300" /><path d="M11 11.500L15 15.500" stroke="#444" strokeWidth="2" /></Ic>
        </button>
        <button type="button" className="ml-[18px] mr-[14px]">Not Logged In</button>
      </div>
      <div className="flex min-h-0 flex-1">
        <LeftPanel />
        <div className="flex w-[10px] shrink-0 flex-col items-center bg-[#e8e8ea] pt-[7px]">
          <Ic w={5} h={10}><path d="M5 0V10L0 5Z" fill="#9a9a9c" /></Ic>
          <span className="mt-[343px]"><Ic w={4} h={6}><path d="M.5 0V6M3.500 0V6" stroke="#aaa" /></Ic></span>
        </div>
        <main className="flex min-w-0 flex-1 flex-col">
          <TopTools />
          <FormatBar />
          <Ruler />
          <Sheet />
        </main>
        <SideTabs />
        <RightPanel />
      </div>
    </div>
  );
}
